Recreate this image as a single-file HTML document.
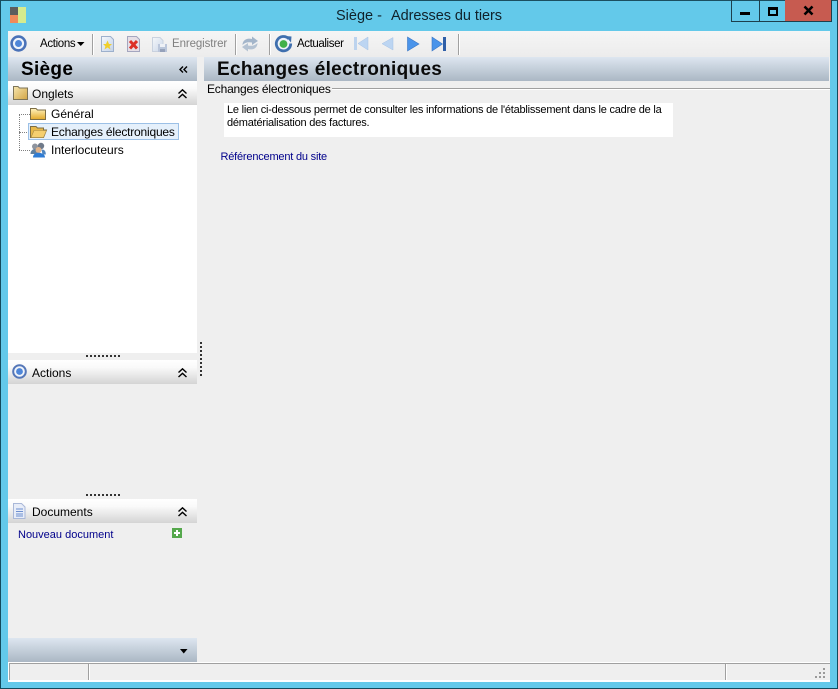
<!DOCTYPE html>
<html><head><meta charset="utf-8">
<style>
html,body{margin:0;padding:0;width:838px;height:689px;overflow:hidden;background:#63c9ea}
body{position:relative;font-family:"Liberation Sans",sans-serif;font-size:12px;color:#000}
.a{position:absolute}
.t{position:absolute;white-space:nowrap;line-height:14px}
.hb{background:linear-gradient(#dde6f0,#abb7c4)}
.hw{background:linear-gradient(#ffffff,#fafafa 30%,#d4d4d4)}
.sep{position:absolute;top:34px;width:1px;height:21px;background:#a0a0a0;box-shadow:1px 0 0 #fff}
.link{color:#00008b}
svg{position:absolute;overflow:visible}
</style></head><body>
<svg width="0" height="0" style="left:0;top:0"><defs>
<linearGradient id="f" x1="0" y1="0" x2="0" y2="1"><stop offset="0" stop-color="#fff3c0"/><stop offset="1" stop-color="#e2a92a"/></linearGradient>
<linearGradient id="g" x1="0" y1="0" x2="1" y2="1"><stop offset="0" stop-color="#f6e6b0"/><stop offset="1" stop-color="#d2a545"/></linearGradient>
<linearGradient id="p" x1="0" y1="0" x2="1" y2="1"><stop offset="0" stop-color="#f5f8fc"/><stop offset="1" stop-color="#c3d2e8"/></linearGradient>
</defs></svg>
<div class="a" style="left:0;top:0;width:838px;height:689px;box-sizing:border-box;border:1px solid #134a5c;border-top-color:#1b4f60"></div>

<!-- title icon -->
<div class="a" style="left:10px;top:7px;width:8px;height:8px;background:#5d5d5d"></div>
<div class="a" style="left:10px;top:15px;width:8px;height:8px;background:#f08a5a"></div>
<div class="a" style="left:18px;top:7px;width:8px;height:16px;background:#d6eb8e"></div>
<div class="t" style="left:336px;top:7px;font-size:14.5px;line-height:18px;color:#10222b;white-space:pre">Siège -<span style="margin-left:9px;letter-spacing:-.06px">Adresses du tiers</span></div>

<!-- window buttons -->
<div class="a" style="left:731px;top:0;width:27px;height:21px;border:1px solid #1d3f4c;border-top:0"></div>
<div class="a" style="left:759px;top:0;width:26px;height:21px;border:1px solid #1d3f4c;border-top:0;border-left:0"></div>
<div class="a" style="left:785px;top:0;width:47px;height:22px;background:#c75b50;border:1px solid #1d3f4c;border-top:0;border-left:0;box-sizing:border-box"></div>
<div class="a" style="left:740px;top:12px;width:10px;height:3px;background:#000"></div>
<div class="a" style="left:768px;top:7px;width:6px;height:4px;border:2px solid #000;border-top-width:3px"></div>
<svg style="left:804px;top:6px" width="10" height="10"><path d="M.5 .5L8.500 8.500M8.500 .5L.5 8.500" stroke="#000" stroke-width="2.600" fill="none"/></svg>

<!-- content bg -->
<div class="a" style="left:8px;top:31px;width:822px;height:651px;background:#efefef"></div>
<div class="a" style="left:8px;top:31px;width:822px;height:26px;background:linear-gradient(#f5f5f5,#ececec)"></div>

<!-- toolbar -->
<svg style="left:10px;top:35px" width="18" height="18"><circle cx="8.500" cy="8.500" r="6.900" fill="#eef3fb" stroke="#4a72b8" stroke-width="2.600"/><circle cx="8.500" cy="8.500" r="3.500" fill="#4f86d8"/></svg>
<div class="t" style="left:40px;top:37px;font-size:11.5px;letter-spacing:-.35px">Actions</div>
<svg style="left:77px;top:42px" width="8" height="5"><path d="M0 0H7.500L3.750 4Z" fill="#000"/></svg>
<div class="sep" style="left:92px"></div>
<svg style="left:100px;top:36px" width="15" height="16"><path d="M1.500 .5H10.500L13.500 3.500V15.500H1.500Z" fill="url(#p)" stroke="#9db0cc"/><path d="M7.500 4.500L9 8H12L9.600 10.200L10.500 13.500L7.500 11.500L4.500 13.500L5.400 10.200L3 8H6Z" fill="#f0cf2c"/></svg>
<svg style="left:126px;top:36px" width="15" height="16"><path d="M1.500 .5H10.500L13.500 3.500V15.500H1.500Z" fill="#e6dfe6" stroke="#a4a6bf"/><path d="M4 5L11 12.500M11 5L4 12.500" stroke="#dc3028" stroke-width="3"/></svg>
<svg style="left:152px;top:37px" width="16" height="16" opacity=".8"><path d="M.5 .5H8L11 3.500V14.500H.5Z" fill="url(#p)" stroke="#c0cbdb"/><rect x="6" y="7" width="9" height="8" fill="#aebcd6"/><rect x="8" y="7" width="5" height="3" fill="#eef2f8"/><rect x="8" y="12" width="5" height="3" fill="#7f8fae"/></svg>
<div class="t" style="left:172px;top:37px;font-size:11.5px;color:#808080;letter-spacing:-.1px">Enregistrer</div>
<div class="sep" style="left:235px"></div>
<svg style="left:241px;top:35px" width="18" height="18"><path d="M1.500 10C1.500 5 6 2.500 11 4V1.500L17 6L11 10V7.500C7 6.800 4 7.500 1.500 10Z" fill="#a3b5ca"/><path d="M16.500 8C16.500 13 12 15.500 7 14V16.500L1 12L7 8V10.500C11 11.200 14 10.500 16.500 8Z" fill="#b4c2d2"/></svg>
<div class="sep" style="left:269px"></div>
<svg style="left:275px;top:35px" width="18" height="18"><path d="M13.800 3.800A7.200 7.200 0 1 0 15.700 8.500" fill="#eef3fb" stroke="#3f6fae" stroke-width="2.800"/><path d="M10.500 1L16.500 1.500L16 7.500Z" fill="#3f6fae"/><circle cx="8.500" cy="9" r="3.900" fill="#41b04a"/></svg>
<div class="t" style="left:297px;top:37px;font-size:11.5px;letter-spacing:-.4px">Actualiser</div>
<svg style="left:353px;top:36px" width="16" height="16"><rect x="1" y="1" width="3" height="13" fill="#bcd3ee"/><path d="M15 1V14L5 7.500Z" fill="#bcd5f2" stroke="#a6c2e4" stroke-width=".5"/></svg>
<svg style="left:380px;top:36px" width="14" height="16"><path d="M13 1.500V14L2 7.700Z" fill="#bcd5f2" stroke="#a6c2e4" stroke-width=".5"/></svg>
<svg style="left:406px;top:36px" width="14" height="16"><path d="M1.500 1V15L13 8Z" fill="#4a94ea" stroke="#3a76c4" stroke-width=".6"/></svg>
<svg style="left:431px;top:36px" width="16" height="16"><path d="M1 1V15L11.500 8Z" fill="#4a94ea" stroke="#3a76c4" stroke-width=".6"/><rect x="12" y="1" width="3" height="14" fill="#2f5fa8"/></svg>
<div class="sep" style="left:458px"></div>

<!-- headers -->
<div class="a hb" style="left:8px;top:57px;width:189px;height:24px"></div>
<div class="a hb" style="left:204px;top:57px;width:625px;height:24px"></div>
<div class="t" style="left:21px;top:59px;font-size:19px;line-height:21px;font-weight:bold;letter-spacing:.3px">Siège</div>
<svg style="left:179px;top:66px" width="9" height="8"><path d="M4 .5L1 3.500L4 6.500M8 .5L5 3.500L8 6.500" stroke="#000" stroke-width="1.400" fill="none"/></svg>
<div class="t" style="left:217px;top:59px;font-size:19px;line-height:21px;font-weight:bold;color:#0a0a0a;letter-spacing:.3px">Echanges électroniques</div>

<!-- Onglets panel -->
<div class="a hw" style="left:8px;top:81px;width:189px;height:24px"></div>
<div class="a" style="left:8px;top:105px;width:189px;height:248px;background:#fff"></div>
<svg style="left:13px;top:86px" width="15" height="14"><path d="M.5 13.500V.5H5L6.500 2H14.500V13.500Z" fill="url(#g)" stroke="#7d7458"/></svg>
<div class="t" style="left:32px;top:87px">Onglets</div>
<svg style="left:178px;top:89px" width="9" height="10"><path d="M.5 4.500L4.500 .8L8.500 4.500M.5 9L4.500 5.300L8.500 9" stroke="#000" stroke-width="1.400" fill="none"/></svg>

<!-- tree -->
<div class="a" style="left:19px;top:114px;height:36px;border-left:1px dotted #808080"></div>
<div class="a" style="left:19px;top:114px;width:11px;border-top:1px dotted #808080"></div>
<div class="a" style="left:19px;top:132px;width:10px;border-top:1px dotted #808080"></div>
<div class="a" style="left:19px;top:150px;width:11px;border-top:1px dotted #808080"></div>
<svg style="left:30px;top:108px" width="16" height="12"><path d="M.5 11.500V.5H6L7.500 2H15.500V11.500Z" fill="url(#f)" stroke="#7d6e45"/></svg>
<div class="a" style="left:28px;top:123px;width:149px;height:15px;border:1px solid #9cc0e6;background:#e5f0fb"></div>
<svg style="left:30px;top:126px" width="17" height="12"><path d="M.5 11.500V.5H6L7.500 2H13.500V4H16.500L13.500 11.500Z" fill="#e8b94a" stroke="#7d6e45"/><path d="M1 11.500L4 4.500H16.500L13.500 11.500Z" fill="#f5cf70" stroke="#a88a45" stroke-width=".6"/></svg>
<svg style="left:30px;top:142px" width="16" height="16"><circle cx="5" cy="4.500" r="3" fill="#8e949e"/><path d="M.5 12C.5 8.500 3 7 5 7S8 9 8 12Z" fill="#5f7f9e"/><circle cx="11" cy="4" r="3.200" fill="#6f7a8a"/><circle cx="8.500" cy="8" r="3" fill="#e0b48c"/><path d="M3 15.500C3 12 6 10.800 8.500 10.800S15 12 15 15.500Z" fill="#2f7cd4"/><path d="M11.500 7.500C14.500 7.500 15.800 9 15.800 12.500H12.500Z" fill="#4f86c0"/></svg>
<div class="t" style="left:51px;top:107px">Général</div>
<div class="t" style="left:51px;top:125px;letter-spacing:-.2px">Echanges électroniques</div>
<div class="t" style="left:51px;top:143px">Interlocuteurs</div>

<!-- grips -->
<div class="a" style="left:86px;top:355px;width:34px;height:2px;background:repeating-linear-gradient(90deg,#333 0 2px,transparent 2px 4px)"></div>
<div class="a" style="left:86px;top:494px;width:34px;height:2px;background:repeating-linear-gradient(90deg,#333 0 2px,transparent 2px 4px)"></div>
<div class="a" style="left:200px;top:342px;width:2px;height:34px;background:repeating-linear-gradient(#333 0 2px,transparent 2px 4px)"></div>

<!-- Actions -->
<div class="a hw" style="left:8px;top:360px;width:189px;height:24px"></div>
<svg style="left:12px;top:364px" width="16" height="16"><circle cx="7.500" cy="7.500" r="6.300" fill="#f1f5fb" stroke="#5577b8" stroke-width="2"/><circle cx="7.500" cy="7.500" r="3.400" fill="#4f86d8"/></svg>
<div class="t" style="left:32px;top:366px">Actions</div>
<svg style="left:178px;top:368px" width="9" height="10"><path d="M.5 4.500L4.500 .8L8.500 4.500M.5 9L4.500 5.300L8.500 9" stroke="#000" stroke-width="1.400" fill="none"/></svg>

<!-- Documents -->
<div class="a hw" style="left:8px;top:499px;width:189px;height:24px"></div>
<svg style="left:13px;top:503px" width="13" height="16"><path d="M.5 .5H8.500L12 4V15.500H.5Z" fill="#e8edf8" stroke="#aab8d8"/><path d="M3 6H10M3 8.500H10M3 11H10M3 13H10" stroke="#6d8fd0"/></svg>
<div class="t" style="left:32px;top:505px">Documents</div>
<svg style="left:178px;top:507px" width="9" height="10"><path d="M.5 4.500L4.500 .8L8.500 4.500M.5 9L4.500 5.300L8.500 9" stroke="#000" stroke-width="1.400" fill="none"/></svg>
<div class="t link" style="left:18px;top:528px;font-size:11px">Nouveau document</div>
<svg style="left:172px;top:528px" width="10" height="10"><rect width="10" height="10" fill="#55a84c"/><path d="M5 2V8M2 5H8" stroke="#fff" stroke-width="2"/></svg>

<!-- bottom bar -->
<div class="a hb" style="left:8px;top:638px;width:189px;height:24px"></div>
<svg style="left:180px;top:649px" width="8" height="5"><path d="M0 0H7.500L3.750 4.500Z" fill="#000"/></svg>

<!-- main content -->
<div class="t" style="left:207px;top:82px;letter-spacing:-.2px">Echanges électroniques</div>
<div class="a" style="left:332px;top:88px;width:498px;height:1px;background:#a0a0a0;box-shadow:0 1px 0 #fff"></div>
<div class="a" style="left:224px;top:103px;width:449px;height:34px;background:#fff"></div>
<div class="t" style="left:227px;top:104px;font-size:11px;line-height:13px;letter-spacing:-.22px;white-space:pre">Le lien ci-dessous permet de consulter les informations de l'établissement dans le cadre de la
dématérialisation des factures.</div>
<div class="t link" style="left:220.500px;top:150px;font-size:11px;letter-spacing:-.2px">Référencement du site</div>

<!-- status bar -->
<div class="a" style="left:8px;top:662px;width:822px;height:1px;background:#fff"></div>
<div class="a" style="left:9px;top:663px;width:821px;height:1px;background:#a0a0a0"></div>
<div class="a" style="left:8px;top:663px;width:1px;height:17px;background:#fff"></div>
<div class="a" style="left:9px;top:664px;width:1px;height:16px;background:#a0a0a0"></div>
<div class="a" style="left:88px;top:664px;width:1px;height:16px;background:#a0a0a0;box-shadow:1px 0 0 #fff"></div>
<div class="a" style="left:725px;top:664px;width:1px;height:16px;background:#a0a0a0;box-shadow:1px 0 0 #fff"></div>
<div class="a" style="left:8px;top:680px;width:822px;height:2px;background:#fff"></div>
<svg style="left:815px;top:668px" width="12" height="12" fill="#9a9a9a"><rect x="8" y="0" width="2" height="2"/><rect x="8" y="4" width="2" height="2"/><rect x="4" y="4" width="2" height="2"/><rect x="8" y="8" width="2" height="2"/><rect x="4" y="8" width="2" height="2"/><rect x="0" y="8" width="2" height="2"/></svg>
</body></html>
